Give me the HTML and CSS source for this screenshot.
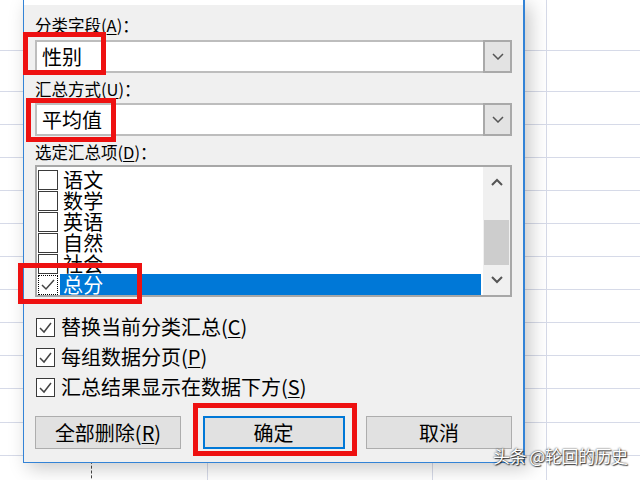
FILE: index.html
```
<!DOCTYPE html>
<html lang="zh-CN">
<head>
<meta charset="utf-8">
<link rel="stylesheet" href="styles.css">
</head>
<body>
<div class="sheet">
  <div class="row h0"><i></i><i></i><i></i><i></i><i></i></div>
  <div class="row h1"><i></i><i></i><i></i><i></i><i></i></div>
  <div class="row"><i></i><i></i><i></i><i></i><i></i></div>
  <div class="row"><i></i><i></i><i></i><i></i><i></i></div>
  <div class="row"><i></i><i></i><i></i><i></i><i></i></div>
  <div class="row"><i></i><i></i><i></i><i></i><i></i></div>
  <div class="row"><i></i><i></i><i></i><i></i><i></i></div>
  <div class="row"><i></i><i></i><i></i><i></i><i></i></div>
  <div class="row"><i></i><i></i><i></i><i></i><i></i></div>
  <div class="row"><i></i><i></i><i></i><i></i><i></i></div>
  <div class="row"><i></i><i></i><i></i><i></i><i></i></div>
  <div class="row h34"><i></i><i></i><i></i><i></i><i></i></div>
  <div class="row"><i></i><i></i><i></i><i></i><i></i></div>
  <div class="row"><i></i><i></i><i></i><i></i><i></i></div>
</div>

<div class="dialog">
  <div class="titlestrip"></div>
  <div class="label l1">分类字段(<u>A</u>)：</div>
  <div class="combo c1">
    <span class="value">性别</span>
    <span class="drop"><svg width="12" height="7" viewBox="0 0 12 7"><polyline points="1,1 6,6 11,1" fill="none" stroke="#555" stroke-width="1.5"/></svg></span>
  </div>
  <div class="label l2">汇总方式(<u>U</u>)：</div>
  <div class="combo c2">
    <span class="value">平均值</span>
    <span class="drop"><svg width="12" height="7" viewBox="0 0 12 7"><polyline points="1,1 6,6 11,1" fill="none" stroke="#555" stroke-width="1.5"/></svg></span>
  </div>
  <div class="label l3">选定汇总项(<u>D</u>)：</div>
  <div class="listbox">
    <div class="items">
      <div class="item"><span class="cb"></span><span class="txt">语文</span></div>
      <div class="item"><span class="cb"></span><span class="txt">数学</span></div>
      <div class="item"><span class="cb"></span><span class="txt">英语</span></div>
      <div class="item"><span class="cb"></span><span class="txt">自然</span></div>
      <div class="item"><span class="cb"></span><span class="txt">社会</span></div>
      <div class="item sel"><span class="cb focus"><svg width="18" height="18" viewBox="0 0 18 18"><polyline points="3,9 7,13 15,4" fill="none" stroke="#444" stroke-width="1.5"/></svg></span><span class="txt">总分</span></div>
    </div>
    <div class="vscroll">
      <div class="sbtn"><svg width="12" height="8" viewBox="0 0 12 8"><polyline points="1,7 6,2 11,7" fill="none" stroke="#555" stroke-width="2"/></svg></div>
      <div class="track"><div class="thumb"></div></div>
      <div class="sbtn"><svg width="12" height="8" viewBox="0 0 12 8"><polyline points="1,1 6,6 11,1" fill="none" stroke="#555" stroke-width="2"/></svg></div>
    </div>
  </div>
  <div class="options">
    <div class="opt"><span class="cb"><svg width="17" height="17" viewBox="0 0 17 17"><polyline points="3,9 7,13 14,4" fill="none" stroke="#444" stroke-width="1.5"/></svg></span>替换当前分类汇总(<u>C</u>)</div>
    <div class="opt"><span class="cb"><svg width="17" height="17" viewBox="0 0 17 17"><polyline points="3,9 7,13 14,4" fill="none" stroke="#444" stroke-width="1.5"/></svg></span>每组数据分页(<u>P</u>)</div>
    <div class="opt"><span class="cb"><svg width="17" height="17" viewBox="0 0 17 17"><polyline points="3,9 7,13 14,4" fill="none" stroke="#444" stroke-width="1.5"/></svg></span>汇总结果显示在数据下方(<u>S</u>)</div>
  </div>
  <div class="buttons">
    <div class="btn wide">全部删除(<u>R</u>)</div>
    <div class="btn default">确定</div>
    <div class="btn wide">取消</div>
  </div>
</div>

<div class="mark m1"></div>
<div class="mark m2"></div>
<div class="mark m3"></div>
<div class="mark m4"></div>

<div class="watermark">头条 @轮回的历史</div>
</body>
</html>
```

FILE: styles.css
```
html, body {
  margin: 0;
  padding: 0;
}
body {
  width: 640px;
  height: 480px;
  overflow: hidden;
  position: relative;
  background: #ffffff;
  font-family: "Noto Sans CJK SC", "Noto Sans", sans-serif;
  color: #000;
}

/* spreadsheet */
.sheet {
  display: flex;
  flex-direction: column;
}
.row {
  display: grid;
  grid-template-columns: 92px 116px 225px 114px 1fr;
  height: 33px;
  box-sizing: border-box;
  border-bottom: 1px solid #d6dae8;
  flex: none;
}
.row.h0 { height: 51px; }
.row.h1 { height: 41px; }
.row.h34 { height: 34px; }
.row i {
  border-right: 1px solid #d6dae8;
}
.row i:first-child {
  border-right: 1px dashed #444;
}
.row i:last-child {
  border-right: none;
}

/* dialog */
.dialog {
  position: absolute;
  left: 23px;
  top: 0;
  width: 502px;
  height: 463px;
  box-sizing: border-box;
  background: #f0f0f0;
  border: 1px solid #3383d6;
  border-top: none;
  border-right-width: 2px;
  padding: 0 11px;
  display: flex;
  flex-direction: column;
  box-shadow: 5px 5px 18px rgba(0, 0, 0, 0.22);
}
.titlestrip {
  height: 5px;
  background: #fff;
  margin: 0 -11px;
  flex: none;
}
.label {
  font-size: 16.5px;
  line-height: 20px;
  height: 20px;
  white-space: nowrap;
  flex: none;
}
.label u, .opt u, .btn u {
  text-decoration-thickness: 1px;
  text-underline-offset: 2px;
}
.l1 { margin-top: 10px; }
.l2 { margin-top: 6px; }
.l3 { margin-top: 6px; }

.combo {
  display: flex;
  height: 33px;
  box-sizing: border-box;
  border: 2px solid #bdbdbd;
  background: #fff;
  flex: none;
}
.c1 { margin-top: 5px; }
.c2 { margin-top: 4px; }
.combo .value {
  flex: 1;
  font-size: 20px;
  line-height: 29px;
  padding-left: 5px;
}
.combo .drop {
  width: 29px;
  box-sizing: border-box;
  margin: -2px -2px -2px 0;
  border: 2px solid #a9a9a9;
  background: #e3e3e3;
  display: flex;
  align-items: center;
  justify-content: center;
}

/* list box */
.listbox {
  margin-top: 3px;
  height: 132px;
  box-sizing: border-box;
  border: 2px solid #a7a7a7;
  background: #fff;
  display: flex;
  flex: none;
}
.items {
  flex: 1;
  padding-top: 2px;
  padding-right: 2px;
  display: flex;
  flex-direction: column;
}
.item {
  display: flex;
  align-items: center;
  height: 21px;
  flex: none;
}
.item .cb {
  width: 20px;
  height: 20px;
  box-sizing: border-box;
  border: 1px solid #3a3a3a;
  background: #fff;
  margin-left: 1px;
  flex: none;
  display: flex;
  align-items: center;
  justify-content: center;
}
.item .cb.focus {
  border: 1px dotted #000;
}
.item .txt {
  flex: 1;
  margin-left: 2px;
  padding-left: 3px;
  font-size: 20px;
  line-height: 21px;
  height: 21px;
  letter-spacing: 0.3px;
}
.item.sel .txt {
  background: #0078d7;
  color: #fff;
}
.vscroll {
  width: 27px;
  background: #f0f0f0;
  display: flex;
  flex-direction: column;
  flex: none;
}
.sbtn {
  height: 30px;
  display: flex;
  align-items: center;
  justify-content: center;
  flex: none;
}
.track {
  flex: 1;
}
.thumb {
  margin: 23px 1px 0;
  height: 45px;
  background: #cdcdcd;
}

/* options */
.options {
  margin-top: 15px;
  display: flex;
  flex-direction: column;
}
.opt {
  display: flex;
  align-items: center;
  height: 30px;
  font-size: 20px;
  line-height: 30px;
  white-space: nowrap;
}
.opt .cb {
  width: 19px;
  height: 19px;
  box-sizing: border-box;
  border: 1px solid #3a3a3a;
  background: #fff;
  margin-left: 1px;
  margin-right: 6px;
  display: flex;
  align-items: center;
  justify-content: center;
  flex: none;
}

/* buttons */
.buttons {
  margin-top: 14px;
  display: flex;
  justify-content: space-between;
}
.btn {
  height: 33px;
  box-sizing: border-box;
  border: 1px solid #adadad;
  background: #e1e1e1;
  font-size: 20px;
  line-height: 1;
  display: flex;
  align-items: center;
  justify-content: center;
  white-space: nowrap;
}
.btn.wide { width: 146px; }
.btn.default {
  width: 142px;
  border: 2px solid #0078d7;
}

/* red annotation boxes */
.mark {
  position: absolute;
  box-sizing: border-box;
  border: 5px solid #ee1111;
}
.m1 { left: 23px; top: 32px; width: 83px; height: 43px; }
.m2 { left: 26px; top: 98px; width: 90px; height: 44px; }
.m3 { left: 18px; top: 263px; width: 124px; height: 41px; }
.m4 { left: 193px; top: 403px; width: 164px; height: 53px; }

/* watermark */
.watermark {
  position: absolute;
  left: 493px;
  top: 445px;
  font-size: 17px;
  line-height: 22px;
  letter-spacing: -0.5px;
  color: #fff;
  white-space: nowrap;
  text-shadow: 0 0 2px rgba(0, 0, 0, 0.9), 1px 1px 1px rgba(0, 0, 0, 0.7);
}
```
